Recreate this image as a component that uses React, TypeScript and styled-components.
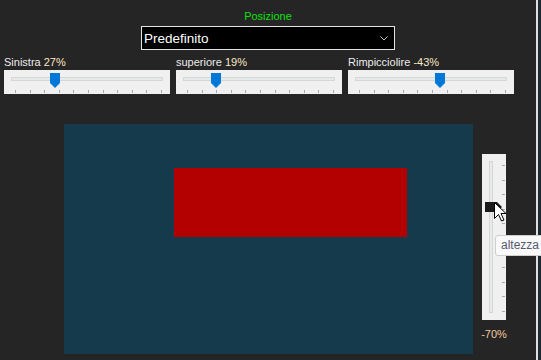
import React from 'react'
import styled, { createGlobalStyle } from 'styled-components'

const GlobalStyle = createGlobalStyle`
  html, body {
    margin: 0;
    padding: 0;
    background: #252525;
    font-family: "Liberation Sans", Arial, sans-serif;
  }
`

const Screen = styled.div`
  position: relative;
  display: flex;
  width: 541px;
  height: 360px;
  overflow: hidden;
`

const Window = styled.div`
  display: flex;
  flex-direction: column;
  width: 536px;
  background: #252525;
`

const WindowEdge = styled.div`
  width: 2px;
  background: #dedede;
`

const Outside = styled.div`
  flex: 1;
  background: #1c2b31;
`

const Header = styled.div`
  display: flex;
  flex-direction: column;
  align-items: center;
  padding-top: 10px;
`

const Caption = styled.div`
  font-size: 11px;
  line-height: 13px;
  color: #10e010;
`

const Combo = styled.div`
  display: flex;
  align-items: center;
  box-sizing: border-box;
  width: 254px;
  height: 24px;
  margin-top: 3px;
  background: #000;
  border: 1px solid #e4e4e4;
  color: #fff;
  font-size: 13.5px;
  padding-left: 2px;
`

const ComboText = styled.span`
  flex: 1;
`

const ComboArrow = styled.svg`
  width: 8px;
  height: 5px;
  margin-right: 6px;
`

const SliderRow = styled.div`
  display: flex;
  gap: 6px;
  padding-left: 4px;
  margin-top: 5px;
`

const SliderGroup = styled.div`
  display: flex;
  flex-direction: column;
  gap: 1px;
  width: 166px;
`

const Label = styled.div`
  font-size: 11px;
  line-height: 14px;
  color: #ececec;
  white-space: nowrap;
`

const Value = styled.span<{ $tone?: string }>`
  color: ${p => p.$tone || '#fde6c4'};
`

const HPanel = styled.div`
  position: relative;
  height: 24px;
  background: #f0f0f0;
`

const HTrack = styled.div`
  position: absolute;
  left: 7px;
  right: 7px;
  top: 7px;
  height: 4px;
  box-sizing: border-box;
  background: #e7eaea;
  border: 1px solid #d6d6d6;
`

const HTicks = styled.div`
  position: absolute;
  left: 11px;
  right: 8px;
  top: 20px;
  height: 3px;
  display: flex;
  justify-content: space-between;
`

const Tick = styled.span`
  display: block;
  width: 1px;
  height: 3px;
  background: #a8a8a8;
`

const HThumb = styled.svg`
  position: absolute;
  top: 3px;
  width: 10px;
  height: 15px;
`

const Main = styled.div`
  display: flex;
  align-items: flex-start;
  margin-top: 30px;
  padding-left: 64px;
`

const Canvas = styled.div`
  display: flex;
  width: 409px;
  height: 230px;
  background: #143a4c;
  padding: 44px 0 0 110px;
  box-sizing: border-box;
`

const Block = styled.div`
  width: 233px;
  height: 69px;
  background: #b30000;
`

const SideColumn = styled.div`
  display: flex;
  flex-direction: column;
  align-items: center;
  margin-left: 9px;
  margin-top: 30px;
  width: 24px;
`

const VPanel = styled.div`
  position: relative;
  width: 24px;
  height: 166px;
  background: #f0f0f0;
`

const VTrack = styled.div`
  position: absolute;
  left: 7px;
  top: 7px;
  bottom: 7px;
  width: 4px;
  box-sizing: border-box;
  background: #e7eaea;
  border: 1px solid #d6d6d6;
`

const VTicks = styled.div`
  position: absolute;
  left: 20px;
  top: 11px;
  bottom: 8px;
  width: 3px;
  display: flex;
  flex-direction: column;
  justify-content: space-between;
`

const VTick = styled.span`
  display: block;
  width: 3px;
  height: 1px;
  background: #a8a8a8;
`

const VThumb = styled.svg`
  position: absolute;
  left: 3px;
  top: 48px;
  width: 17px;
  height: 10px;
`

const SideValue = styled.div`
  margin-top: 7px;
  font-size: 11px;
  line-height: 14px;
  color: #f3c9a0;
`

const Cursor = styled.svg`
  position: absolute;
  left: 494px;
  top: 202px;
  width: 13px;
  height: 20px;
`

const Tooltip = styled.div`
  position: absolute;
  left: 495px;
  top: 235px;
  padding: 2px 6px 3px 5px;
  background: #f9f9f9;
  border: 1px solid #cfcfcf;
  border-radius: 3px;
  font-size: 12px;
  line-height: 14px;
  color: #575a6e;
`

const ticks = Array.from({ length: 11 })

const HSlider: React.FC<{ name: string; value: string; thumb: number }> = ({
  name,
  value,
  thumb,
}) => (
  <SliderGroup>
    <Label>
      {name} <Value>{value}</Value>
    </Label>
    <HPanel>
      <HTrack />
      <HTicks>
        {ticks.map((_, i) => (
          <Tick key={i} />
        ))}
      </HTicks>
      <HThumb viewBox="0 0 10 15" style={{ left: thumb }}>
        <path d="M0 0 H10 V10 L5 15 L0 10 Z" fill="#0078d7" />
      </HThumb>
    </HPanel>
  </SliderGroup>
)

export default function App() {
  return (
    <Screen>
      <GlobalStyle />
      <Window>
        <Header>
          <Caption>Posizione</Caption>
          <Combo>
            <ComboText>Predefinito</ComboText>
            <ComboArrow viewBox="0 0 8 5">
              <path d="M0.5 0.5 L4 4 L7.5 0.5" fill="none" stroke="#c8c8c8" strokeWidth="1" />
            </ComboArrow>
          </Combo>
        </Header>
        <SliderRow>
          <HSlider name="Sinistra" value="27%" thumb={46} />
          <HSlider name="superiore" value="19%" thumb={35} />
          <HSlider name="Rimpicciolire" value="-43%" thumb={87} />
        </SliderRow>
        <Main>
          <Canvas>
            <Block />
          </Canvas>
          <SideColumn>
            <VPanel>
              <VTrack />
              <VTicks>
                {ticks.map((_, i) => (
                  <VTick key={i} />
                ))}
              </VTicks>
              <VThumb viewBox="0 0 17 10">
                <path d="M0 0 H12 L17 5 L12 10 H0 Z" fill="#1a1a1a" />
              </VThumb>
            </VPanel>
            <SideValue>-70%</SideValue>
          </SideColumn>
        </Main>
      </Window>
      <WindowEdge />
      <Outside />
      <Cursor viewBox="0 0 13 20">
        <path
          d="M0.5 0.5 V16.5 L4.5 12.5 L7.5 19 L10 18 L7 11.5 H12 Z"
          fill="#fff"
          stroke="#000"
          strokeWidth="1"
          strokeLinejoin="miter"
        />
      </Cursor>
      <Tooltip>altezza</Tooltip>
    </Screen>
  )
}
